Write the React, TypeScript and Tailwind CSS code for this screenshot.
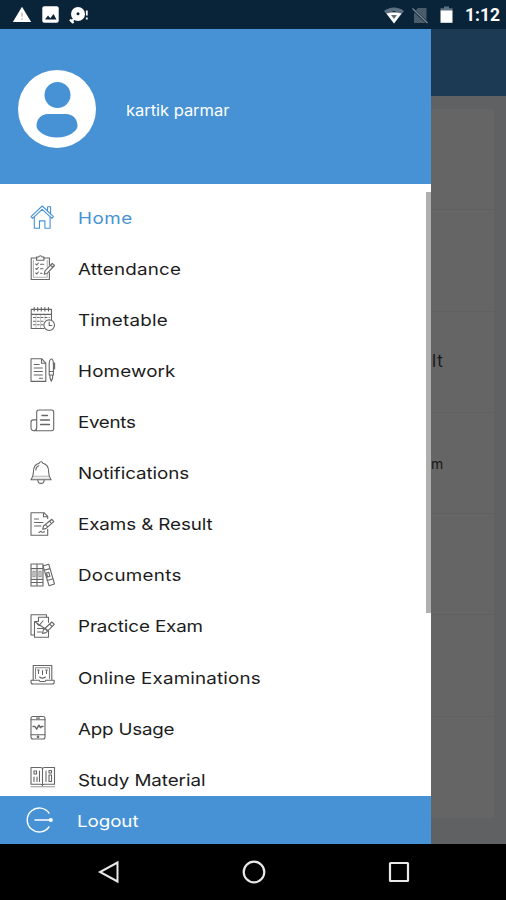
import type { ReactNode } from "react";

function Icon({ children, className = "" }: { children: ReactNode; className?: string }) {
  return (
    <svg
      viewBox="0 0 26 26"
      className={`h-[26px] w-[26px] shrink-0 ${className}`}
      fill="none"
      stroke="currentColor"
      strokeWidth="1.1"
      strokeLinecap="round"
      strokeLinejoin="round"
    >
      {children}
    </svg>
  );
}

const items = [
  {
    label: "Home",
    tracking: "tracking-[0.42px]",
    icon: (
      <>
        <path d="M1 12.6 12.2 2l11.2 10.6-1.5 1.8L12.2 5.3 2.5 14.4z" />
        <path d="M4.3 13v11.3h5.2v-7.4h5.4v7.4h5.2V13M17.6 6.6V2.7h3v7" />
      </>
    ),
  },
  {
    label: "Attendance",
    tracking: "tracking-[0.16px]",
    icon: (
      <>
        <path d="M7 3H1.2v21.5h18.2v-7M13.5 3h5.9v7" />
        <path d="M6.5 2h2.2a1.8 1.8 0 0 1 3.4 0H14v3.2H6.5z" />
        <path d="M3.4 5.3v17h13.8v-3M17.2 5.3V12" strokeOpacity=".5" />
        <path d="m5.8 9 1 1 1.6-2M5.8 13.5l1 1 1.6-2M5.8 18l1 1 1.6-2M10.5 9.3h3.2M10.5 13.8h2.5M10.5 18.3h1.5" />
        <path d="m14.2 19.2.8-3.4 7.2-7.5 2.3 2.2-7.2 7.7zM20.5 10l2.3 2.3" />
      </>
    ),
  },
  {
    label: "Timetable",
    tracking: "tracking-[0.18px]",
    icon: (
      <>
        <path d="M14 22.5H1.2V3.4h20.3v10M1.2 8.4h20.3" />
        <path d="M4.2 1.5V5M7.7 1.5V5m3.6-3.5V5m3.6-3.5V5m3.6-3.5V5" />
        <path d="M3.5 11.5h15.8M3.5 15.2H14M3.5 18.8h9.5" strokeDasharray="1.8 2.1" />
        <path d="M6 8.5v13.500M10.500 8.500v13.500M15 8.500v5" strokeOpacity=".35" />
        <circle cx="19.2" cy="19.2" r="5.3" />
        <path d="M19.2 16v3.500h2.700" />
      </>
    ),
  },
  {
    label: "Homework",
    tracking: "tracking-[0.13px]",
    icon: (
      <>
        <path d="M1 1.7h10.6l4.2 4.4v18.3H1zM11.5 1.8v4.5h4.2" />
        <path d="M4.2 7.5h5M4.2 11h8.2M4.2 14.5h8.2M4.2 18h8.2M9.5 21.3h3" />
        <path d="M19.2 7c0-3 1.1-5 2.1-5s2.1 2 2.1 5v11h-4.2zM20 18v3l1.3 3.2 1.3-3.2v-3M19.2 14.5h4.2M23.4 6h1.2v6" />
      </>
    ),
  },
  {
    label: "Events",
    tracking: "-tracking-[0.28px]",
    icon: (
      <>
        <path d="M6.7 20V4.2C6.7 2.8 7.5 2 8.8 2h12.9c1.3 0 2 .8 2 2.2v16.3c0 1.4-.8 2.2-2 2.2H4c-1.8 0-3-1.2-3-3v-5.5c0-1.5.8-2.3 2.3-2.3h3.4M6.7 19.5c0 1.8-.8 3-2.7 3.2" />
        <path d="M12 7.5h5.5M10.5 12h9M10.5 16.5h9" strokeWidth="1.3" />
      </>
    ),
  },
  {
    label: "Notifications",
    tracking: "tracking-[-0.08px]",
    icon: (
      <>
        <path d="M9.3 3.2a1.8 1.8 0 0 1 3.5 0c4.3.9 5.8 4.2 5.800 8.300 0 4 .5 5.700 2.500 8.300H1c2-2.600 2.500-4.300 2.500-8.300 0-4.100 1.500-7.400 5.800-8.300z" />
        <path d="M3.2 16.3h15.7" strokeOpacity=".5" />
        <path d="M3.500 17.500h15.200l1.500 2H1.800z" fill="currentColor" fillOpacity=".2" stroke="none" />
        <path d="M7.8 20c.2 4.5 6.2 4.5 6.4 0M5.800 10c.2-2.300 1.200-3.700 3-4.300" />
      </>
    ),
  },
  {
    label: "Exams & Result",
    tracking: "tracking-[-0.1px]",
    icon: (
      <>
        <path d="M17.7 7.5V5.3L14 1.7H1v22.5h16.7v-6M13.5 1.8v4h4" />
        <path d="M4.5 8h4M4.5 11.5H13M4.5 15H11M9 21.5l2-1.2 1.2 1 2.3-.4" />
        <path d="m12.7 18.3.8-3.3 8.3-6.7 2 2.3-8 7zM19.5 10.2l2 2.3M15.5 13.5l2 2.2" />
      </>
    ),
  },
  {
    label: "Documents",
    tracking: "tracking-[0.24px]",
    icon: (
      <>
        <path d="M1 2h6v22H1zM7 2h6v22H7zM1 6.5h12M1 17.5h12M1 20.5h12" />
        <path d="M3 9.5h2v5H3zM9 9.5h2v5H9z" strokeOpacity=".6" />
        <path d="M1 6.500h12v11H1z" fill="currentColor" fillOpacity=".15" stroke="none" />
        <path d="m13 4 5.8-1.7L24.5 22 19 23.7zM14.2 8.3 20 6.6M17.2 18.5l5.8-1.7M16.5 11l2.3-.7 1.1 4-2.3.7z" />
      </>
    ),
  },
  {
    label: "Practice Exam",
    tracking: "tracking-[-0.12px]",
    icon: (
      <>
        <path d="M4.5 22H1V1.7h15.5v2.5" />
        <path d="M8.5 4.2h10v5M18.5 18v6.3h-14V8.5zM8.5 4.2v4.3h-4" />
        <path d="m7.5 11 1.5 1.5L13 8M7.5 15.5h6M7.5 19h4" />
        <path d="m12.5 20.5.8-3.5 8.5-8 2.5 2.3-8.3 8.3zM19.5 11l2.5 2.3M15 15.5l2.2 2.2" />
      </>
    ),
  },
  {
    label: "Online Examinations",
    tracking: "tracking-[0.14px]",
    icon: (
      <>
        <path d="M3.2 16V1.500h18.600V16" />
        <path d="M5.500 14.500V3.800h14v10.700" strokeOpacity=".8" />
        <path d="M1 16.200h8l1 1.300h5l1-1.300h8.200V18c0 1.200-.8 2-2 2H3c-1.200 0-2-.8-2-2z" />
        <path d="M8.500 7v2.500M16.500 7v2.500M12.500 6.500v4M9.500 13c1.800 1.300 4.200 1.300 6 0M7.500 6h1.800M15.700 6h1.800" />
      </>
    ),
  },
  {
    label: "App Usage",
    tracking: "tracking-[-0.19px]",
    icon: (
      <>
        <rect x="1" y="1.5" width="14" height="22.5" rx="2" />
        <path d="M1 4.8h14M1 19.7h14M6.5 3.1h3" />
        <path d="M3 11.5h2l1.7 2.7 2.2-4 1.5 2.5 1-1.2H13" strokeWidth="1.4" />
        <circle cx="8" cy="21.8" r=".8" />
      </>
    ),
  },
  {
    label: "Study Material",
    tracking: "tracking-[-0.06px]",
    icon: (
      <>
        <path d="M1 1.500h9.500c1.300 0 2 .5 2 1.500 0-1 .7-1.500 2-1.500h10v16.700h-10c-1.300 0-2 .4-2 1.300 0-.9-.7-1.300-2-1.300H1zM12.500 3v16" />
        <path d="M1 20.800h23.500" strokeOpacity=".7" />
        <path d="M4 5h2.500v3H4zM4 11v4.500M7 11v4.500M9.500 5v10.500M16 5v10.500M19 9h2.500v6.500H19zM19 4.500h2.500V7H19z" />
      </>
    ),
  },
];

function StatusBar() {
  return (
    <header className="flex h-[28.5px] shrink-0 items-center justify-between bg-[#092339] pr-2 pl-3 text-white">
      <div className="flex items-center gap-[10px] pt-px">
        <svg viewBox="0 0 20 18" className="h-[17px] w-[20px]">
          <path d="M10 .7 19.7 17H.3z" fill="white" />
          <path d="M10 7v4.5M10 13v1.5" stroke="#b4bbc0" strokeWidth="1.5" />
        </svg>
        <svg viewBox="0 0 17 17" className="h-[17px] w-[17px]">
          <rect x=".3" y=".3" width="16.4" height="16.4" rx="2" fill="white" />
          <path d="m3 13.5 3-4 2.3 2.7L11.5 8l3 5.5z" fill="#092339" />
        </svg>
        <svg viewBox="0 0 20 18" className="h-[18px] w-[20px]">
          <circle cx="9" cy="8" r="7" fill="white" />
          <path d="M1 13.500 4.500 17" stroke="white" strokeWidth="2.400" />
          <path d="m2 16 3.500-3.500" stroke="white" strokeWidth="2" />
          <circle cx="9" cy="7.7" r="1.5" fill="#092339" />
          <path d="M17.8 4.5v5M17.8 11.5v2" stroke="white" strokeWidth="1.8" />
        </svg>
      </div>
      <div className="flex items-center pt-[2px]">
        <svg viewBox="0 0 20 17" className="h-[17px] w-[20px]">
          <path d="M0 4C5.5-.8 14.5-.8 20 4L10 16.5z" fill="#5d7080" />
          <path d="M2.500 6.500C7 5.200 13 5.200 17.500 6.500L10 16.500z" fill="white" />
          <path d="M7 8h6l-3 4z" fill="#5d7080" />
          <path d="M8.500 4.500h3" stroke="#092339" />
        </svg>
        <svg viewBox="0 0 17 17" className="ml-[8px] h-[17px] w-[17px]">
          <path d="M6 1h8.5v15H2V5z" fill="#4a5c6a" />
          <path d="m0 1.500 16 15" stroke="#092339" strokeWidth="2.500" />
          <path d="m.5 1.500 15 14.500" stroke="#7b8994" strokeWidth="1.300" />
        </svg>
        <svg viewBox="0 0 13 18" className="ml-[11px] h-[18px] w-[13px]">
          <path d="M4 .5h5v1.800h3.500V5H.5V2.300H4z" fill="#5d7080" />
          <path d="M.5 4.500h12v12.300H.5z" fill="white" />
        </svg>
        <span className="ml-[12px] w-[33px] font-['Roboto',sans-serif] text-[17.5px] leading-5 font-bold whitespace-nowrap">
          1:12
        </span>
      </div>
    </header>
  );
}

// Home page left visible beside the open drawer
function DimmedPage() {
  return (
    <section className="flex min-w-0 flex-1 flex-col overflow-hidden bg-[#606163] text-[#181818]">
      <div className="h-[67.5px] shrink-0 bg-[#1d3a55]" />
      <div className="mt-[13px] mr-[12px] flex flex-col bg-[#656565]">
        {["", "", "lt", "m", "", "", ""].map((text, i) => (
          <div
            key={i}
            className={
              i === 6
                ? "h-[101px]"
                : "flex h-[101.3px] items-center border-b border-[#5f6160]"
            }
          >
            <span className={text === "m" ? "text-[14px]" : "ml-px text-[17px] tracking-[0.8px]"}>
              {text}
            </span>
          </div>
        ))}
      </div>
    </section>
  );
}

export default function App() {
  return (
    <div className="flex h-[900px] w-[506px] flex-col overflow-hidden bg-black font-['Inter','Liberation_Sans',sans-serif]">
      <StatusBar />

      <main className="flex min-h-0 flex-1">
        <aside className="flex w-[431px] shrink-0 flex-col bg-white">
          <div className="flex h-[155px] shrink-0 items-center bg-[#4692d5] pt-[6px] pl-[18px] text-white">
            <svg viewBox="0 0 78 78" className="h-[78px] w-[78px]">
              <circle cx="39" cy="39" r="39" fill="white" />
              <circle cx="39.5" cy="25" r="13" fill="#4692d5" />
              <path
                d="M30 44h18c7 0 11.500 5 11.500 12 0 5-9 11.500-20.500 11.500S18.500 61 18.500 56C18.500 49 23 44 30 44z"
                fill="#4692d5"
              />
            </svg>
            <span className="ml-[30px] origin-left scale-x-110 pt-[4px] text-[15px] tracking-[-0.03px]">
              kartik parmar
            </span>
          </div>

          <nav className="relative min-h-0 flex-1 overflow-hidden">
            <ul className="pt-2">
              {items.map(({ label, tracking, icon }, i) => (
                <li
                  key={label}
                  className={`flex h-[51.1px] items-center pl-[30px] ${i === 0 ? "text-[#4692d5]" : "text-[#1c1c1c]"}`}
                >
                  <Icon className={i === 0 ? "" : "text-[#666]"}>{icon}</Icon>
                  <span
                    className={`ml-[22px] origin-left scale-x-[1.14] pt-[2px] text-[16.5px] whitespace-nowrap ${tracking}`}
                  >
                    {label}
                  </span>
                </li>
              ))}
            </ul>
            <div className="absolute top-[8px] right-0 h-[421px] w-[5px] bg-[#afafaf]" />
          </nav>

          <button className="flex h-[48px] shrink-0 items-center bg-[#4692d5] pl-[26px] text-white">
            <svg viewBox="0 0 28 26" className="h-[26px] w-[28px]" fill="none" stroke="white" strokeWidth="1.4">
              <path d="M23.3 6.500a12 12 0 1 0 0 13M8.500 13h16" />
              <circle cx="24.800" cy="13" r="2.100" fill="white" stroke="none" />
            </svg>
            <span className="ml-[23px] origin-left scale-x-[1.14] pt-[3px] text-[16.5px] tracking-[-0.08px]">
              Logout
            </span>
          </button>
        </aside>
        <DimmedPage />
      </main>

      <footer className="flex h-14 shrink-0 items-center justify-between bg-black pr-[95px] pl-[97px]">
        <svg viewBox="0 0 24 24" className="h-6 w-6" fill="none" stroke="#e8e8e8" strokeWidth="2">
          <path d="M20.5 2.5v19L3 12z" />
        </svg>
        <svg viewBox="0 0 24 24" className="h-6 w-6" fill="none" stroke="#e8e8e8" strokeWidth="2.2">
          <circle cx="12" cy="12" r="10.3" />
        </svg>
        <svg viewBox="0 0 24 24" className="h-6 w-6" fill="none" stroke="#e8e8e8" strokeWidth="2.2">
          <rect x="3" y="3" width="18" height="18" rx=".5" />
        </svg>
      </footer>
    </div>
  );
}
